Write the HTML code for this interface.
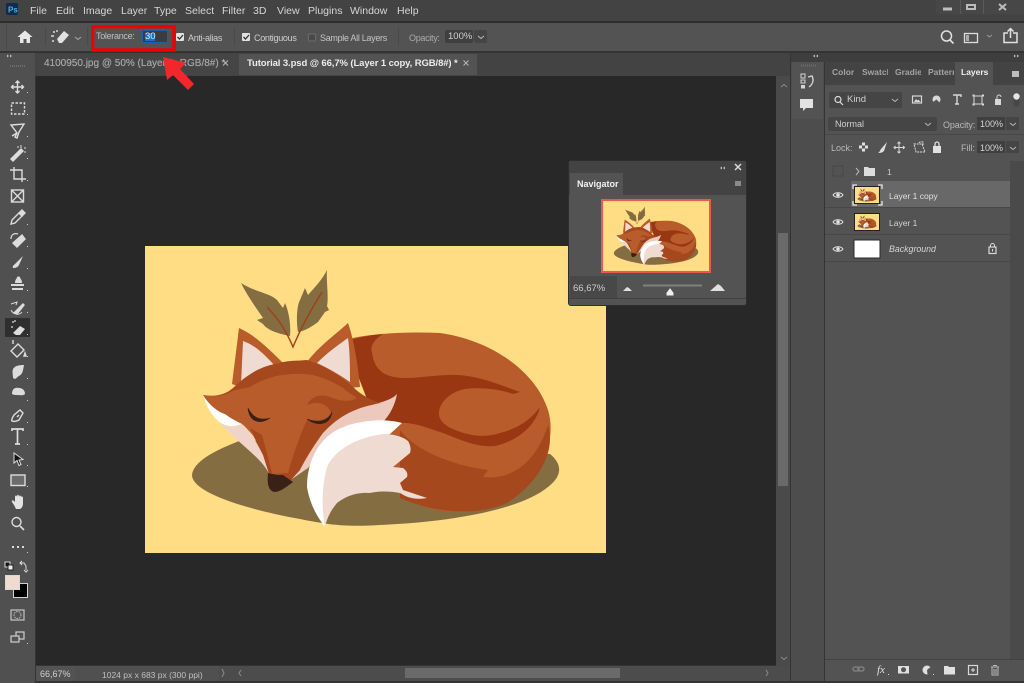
<!DOCTYPE html>
<html><head><meta charset="utf-8"><style>
html,body{margin:0;padding:0;width:1024px;height:683px;overflow:hidden;background:#2e2e2e}
body{position:relative;font-family:"Liberation Sans",sans-serif;color:#c8c8c8;font-size:10px}
.b{position:absolute}
.t{position:absolute;white-space:nowrap;line-height:12px}
.o{font-size:9px;letter-spacing:-.3px}
svg{position:absolute;left:0;top:0}
</style></head><body>
<div class="b" style="left:0;top:0;width:1024px;height:21px;background:#434343"></div>
<div class="b" style="left:936px;top:0;width:88px;height:14px;background:#474747;border-radius:0 0 0 3px"></div>
<div class="b" style="left:0;top:23px;width:1024px;height:28px;background:#535353"></div>
<div class="b" style="left:0;top:51px;width:1024px;height:632px;background:#343434"></div>
<div class="b" style="left:0;top:53px;width:35px;height:630px;background:#505050"></div>
<div class="b" style="left:35px;top:53px;width:755px;height:23px;background:#434343"></div>
<div class="b" style="left:36px;top:54px;width:203px;height:21px;background:#454545"></div>
<div class="b" style="left:239px;top:54px;width:238px;height:21px;background:#535353"></div>
<div class="b" style="left:36px;top:76px;width:740px;height:589px;background:#282828"></div>
<div class="b" style="left:776px;top:76px;width:14px;height:590px;background:#4a4a4a"></div>
<div class="b" style="left:778px;top:233px;width:10px;height:253px;background:#6a6a6a"></div>
<div class="b" style="left:36px;top:666px;width:754px;height:15px;background:#4c4c4c"></div>
<div class="b" style="left:36px;top:666px;width:39px;height:15px;background:#535353"></div>
<div class="b" style="left:75px;top:666px;width:144px;height:15px;background:#505050"></div>
<div class="b" style="left:405px;top:668px;width:215px;height:10px;background:#6a6a6a"></div>
<div class="b" style="left:791px;top:53px;width:33px;height:628px;background:#4d4d4d"></div>
<div class="b" style="left:792px;top:62px;width:31px;height:57px;background:#535353"></div>
<div class="b" style="left:825px;top:62px;width:199px;height:619px;background:#535353"></div>
<div class="b" style="left:825px;top:62px;width:199px;height:23px;background:#434343"></div>
<div class="b" style="left:955px;top:62px;width:38px;height:23px;background:#535353"></div>
<div class="b" style="left:791px;top:53px;width:233px;height:9px;background:#3e3e3e"></div>
<div class="b" style="left:1010px;top:161px;width:14px;height:498px;background:#4a4a4a"></div>
<div class="b" style="left:851px;top:181px;width:159px;height:26px;background:#686868"></div>
<div class="b" style="left:825px;top:181px;width:26px;height:26px;background:#535353"></div>
<div class="b" style="left:825px;top:207px;width:185px;height:1px;background:#474747"></div>
<div class="b" style="left:825px;top:234px;width:185px;height:1px;background:#474747"></div>
<div class="b" style="left:825px;top:261px;width:185px;height:1px;background:#474747"></div>
<div class="b" style="left:825px;top:134px;width:199px;height:1px;background:#484848"></div>
<div class="b" style="left:825px;top:659px;width:199px;height:1px;background:#434343"></div>
<div class="b" style="left:829px;top:92px;width:73px;height:16px;background:#454545;border-radius:2px"></div>
<div class="b" style="left:828px;top:117px;width:109px;height:14px;background:#454545;border-radius:2px"></div>
<div class="b" style="left:977px;top:117px;width:28px;height:13px;background:#3f3f3f"></div>
<div class="b" style="left:1006px;top:117px;width:13px;height:13px;background:#454545"></div>
<div class="b" style="left:977px;top:141px;width:28px;height:12px;background:#3f3f3f"></div>
<div class="b" style="left:1006px;top:141px;width:13px;height:12px;background:#454545"></div>
<div class="b" style="left:445px;top:30px;width:28px;height:13px;background:#3f3f3f;border-radius:2px"></div>
<div class="b" style="left:474px;top:30px;width:13px;height:13px;background:#454545;border-radius:2px"></div>
<div class="b" style="left:142px;top:30px;width:26px;height:13px;background:#3c3c3c;box-shadow:inset 0 0 0 1px #1d62a8"></div>
<div class="b" style="left:145px;top:33px;width:10px;height:8px;background:#1a6fc4"></div>
<div class="b" style="left:145px;top:246px;width:461px;height:307px;background:#ffdd85"></div>

<div class="t" style="left:44px;top:58px;font-size:10px;color:#a6a6a6;text-shadow:0 0 .4px #a6a6a6">4100950.jpg @ 50% (Layer 1, RGB/8#) *</div>

<svg width="1024" height="683" viewBox="0 0 1024 683">
<defs>
<symbol id="fox" viewBox="145 246 461 307" preserveAspectRatio="none">
<rect x="145" y="246" width="461" height="307" fill="#ffdd85"/>
<path d="M242 440C215 450 192 462 192 476C194 492 240 508 300 519C330 525 345 527 380 525C450 522 520 510 548 487C565 474 560 462 550 454Z" fill="#846d41"/>
<path d="M241 283C255 292 270 293 277 300L283 308 285 303C289 312 291 325 290 336C280 334 268 331 263 324L257 320 263 318C254 305 247 295 241 283Z" fill="#846d41"/>
<path d="M327 270C326 280 329 298 327 306L329 310 325 312 318 322C310 328 304 331 298 332C296 320 297 305 300 300L305 288 308 295C315 287 322 280 327 270Z" fill="#846d41"/>
<path d="M267 307C280 320 288 335 293 347C300 330 312 308 322 292" fill="none" stroke="#a0401a" stroke-width="1.400"/>
<path d="M345 340C360 335 400 331 440 333C490 340 535 370 548 410C560 450 530 495 480 510C445 517 420 505 400 498L380 420Z" fill="#b85c2c"/>
<path d="M345 342C355 338 370 335 383 334C373 340 370 347 372 353C374 366 380 373 390 376C405 381 430 375 450 375C475 374 500 385 520 392L513 394C500 389 480 387 465 389C450 392 440 402 439 412C438 420 445 426 455 430C470 436 485 438 500 433C520 428 532 418 540 407C536 425 518 441 495 446C475 448 455 437 440 432C425 427 415 423 403 423L375 420Z" fill="#983712"/>
<path d="M400 430C415 450 450 465 488 470L483 477C510 480 535 465 548 425C556 450 540 482 507 503C480 515 440 515 400 498Z" fill="#a6481d"/>
<path d="M232 384L239 328C255 335 270 350 282 362L296 364 307 362C320 345 335 335 348 323C354 340 358 365 360 387L260 395Z" fill="#b85c2c"/>
<path d="M241 385L243 341C255 345 265 355 274 365C262 372 250 378 241 385Z" fill="#f0dbd2"/>
<path d="M317 363C327 353 338 345 348 338C350 352 350 368 350 382C340 375 328 368 317 363Z" fill="#f0dbd2"/>
<path d="M397 394C388 404 362 405 340 415L304 452 292 479 308 468 340 432 382 423C390 415 395 405 397 394Z" fill="#ecc9bc"/>
<path d="M233 388C250 372 262 366 280 363C290 360 298 361 307 360C325 366 340 375 353 387C362 396 372 400 380 403C355 408 340 415 323 433C312 448 304 462 300 470L290 481 268 473L263 453 250 430 240 423 203 395C215 397 225 395 233 388Z" fill="#a6481d"/>
<path d="M203 395C215 397 225 396 232 391L250 387C270 374 295 372 313 375C325 378 335 383 343 388C350 394 355 396 357 398C348 403 340 401 327 396C318 394 310 398 307 405C318 400 328 404 331 413C328 420 315 422 307 420C300 435 293 455 288 473L270 474 263 453C258 440 250 430 240 424C222 420 210 410 203 395Z" fill="#b85c2c"/>
<path d="M250 428C257 440 262 458 268 473L272 473C268 458 265 445 262 435Z" fill="#a6481d"/>
<path d="M203 395C209 405 218 412 225 414C230 418 236 421 242 424C232 428 224 426 218 421C210 413 206 405 203 395Z" fill="#fff"/>
<path d="M220 423C228 428 236 427 242 424C250 430 258 445 263 455L269 474C262 458 240 445 220 423Z" fill="#f0d4c8"/>
<path d="M248 408C249 420 258 426 270 418C260 421 253 418 248 408Z" fill="#3a2118" stroke="#3a2118" stroke-width=".6"/>
<path d="M307 419C318 427 330 425 332 412C328 422 318 423 307 419Z" fill="#3a2118" stroke="#3a2118" stroke-width=".6"/>
<path d="M268 473L277 475 283 475 293 482C285 488 280 492 274 492C268 490 267 483 268 473Z" fill="#3a2118"/>
<path d="M402 423C385 418 355 420 337 430C318 440 307 462 307 487C310 505 318 518 325 527C322 510 325 480 340 460C355 445 375 438 390 434Z" fill="#fff"/>
<path d="M383 434C392 434 402 436 408 441C411 446 411 450 410 453L393 467 403 468C407 471 408 474 407 477L400 483 403 490 427 498C415 500 408 498 400 493C390 491 380 491 370 493C355 492 345 497 337 503C331 510 327 518 325 527C322 510 321 490 327 467C335 450 355 438 383 434Z" fill="#f0dbd2"/>
</symbol>
</defs>
<use href="#fox" x="145" y="246" width="461" height="307"/>

<!-- PS logo -->
<rect x="6" y="3" width="12" height="12" rx="2" fill="#0f2c4a"/>
<text x="8" y="12.500" font-size="8" font-family="Liberation Sans" font-weight="bold" fill="#4fb2f3">Ps</text>

<!-- window buttons -->
<g stroke="#bdbdbd" fill="none">
<path d="M943 9h9" stroke-width="3"/>
<rect x="967" y="5" width="8" height="4" stroke-width="2"/>
<path d="M999 4l7 6M1006 4l-7 6" stroke-width="2"/>
<path d="M960.500 0v14M983.500 0v14" stroke="#5a5a5a"/>
</g>
<!-- options bar icons -->
<path d="M25 30.500l-7.500 6.500h2.500v6h3.500v-4h3v4h3.500v-6h2.500z" fill="#e8e8e8"/>
<g stroke="#4a4a4a"><path d="M6.500 24v26M45.500 27v19M87.500 27v19M234.500 27v19M398.500 27v19"/></g>
<path d="M57 39l7-8 5 4-7 8h-3z" fill="#e0e0e0"/><path d="M51 36h3M53 32h2M52 41h2M57 30v2" stroke="#ddd" stroke-width="1.400"/>
<path d="M75 37l3 2.500 3-2.500" fill="none" stroke="#aaa"/>
<!-- checks -->
<g><rect x="176" y="33" width="8" height="8" rx="1" fill="#e2e2e2"/><path d="M177.500 37l2 2 3.500-4" fill="none" stroke="#333" stroke-width="1.300"/>
<rect x="242" y="33" width="8" height="8" rx="1" fill="#e2e2e2"/><path d="M243.500 37l2 2 3.500-4" fill="none" stroke="#333" stroke-width="1.300"/>
<rect x="308.500" y="34" width="7" height="7" rx="1" fill="#484848" stroke="#6c6c6c"/></g>
<path d="M478 36l3 2.500 3-2.500" fill="none" stroke="#bbb"/>
<!-- top right -->
<circle cx="946.500" cy="36" r="5" fill="none" stroke="#e0e0e0" stroke-width="1.500"/><path d="M950 40l3.500 3.500" stroke="#e0e0e0" stroke-width="1.600"/>
<rect x="964.500" y="33.500" width="13" height="9" fill="none" stroke="#ddd" stroke-width="1.300"/><rect x="966" y="35" width="3" height="6" fill="#aaa"/>
<path d="M987 35l2.500 2 2.500-2" fill="none" stroke="#999"/>
<path d="M1008 33h-4v9.500h13v-9.500h-4M1010.500 38v-9M1007.500 31.500l3-3 3 3" fill="none" stroke="#e2e2e2" stroke-width="1.500"/>
<!-- red box and arrow -->
<rect x="92.700" y="26.700" width="81.300" height="23.300" fill="none" stroke="#f00000" stroke-width="3.400"/>
<path d="M163 57L186 63 180 69 194 84 188 90 173 75 167 80Z" fill="#f3262c"/>
<!-- collapse chevrons -->
<path d="M7 54.500l2 1.500-2 1.500zM10 54.500l2 1.500-2 1.500zM815 54.500l-2 1.500 2 1.500zM818 54.500l-2 1.500 2 1.500zM1014 54.500l2 1.500-2 1.500zM1017 54.500l2 1.500-2 1.500z" fill="#c0c0c0"/>
<path d="M10 66h15" stroke="#6e6e6e" stroke-dasharray="1 1" stroke-width="2"/>
<path d="M801 65.500h15" stroke="#6e6e6e" stroke-dasharray="1 1" stroke-width="2"/>
<!-- tab close x -->
<path d="M223 60.500l5 5M228 60.500l-5 5M463.500 60.500l5 5M468.500 60.500l-5 5" stroke="#b8b8b8"/>
<path d="M1012 71h7v6h-7z" fill="#bcbcbc"/>

<!-- tool icons -->
<g fill="none" stroke="#dcdcdc" stroke-width="1.400">
<rect x="5" y="318" width="25" height="19" fill="#2f2f2f" stroke="none"/>
<path d="M17.500 81v12M11.500 87h12M15.500 83l2-2 2 2M15.500 91l2 2 2-2M13.500 85l-2 2 2 2M21.500 85l2 2-2 2"/>
<rect x="11.500" y="103" width="13" height="11" stroke-dasharray="2.500 1.500"/>
<path d="M11 125l13-1-5 8-2 6-2-1 2-4-6-8zM17 133l-5 3"/>
<path d="M11 159l10-10 2 2-10 10z" fill="#dcdcdc"/><path d="M21 145v3M24 148h2M17 147h2M24 152h2" stroke-width="1"/>
<path d="M14 167v12h12M10 170h12v12"/>
<rect x="11.500" y="190" width="12" height="12"/><path d="M11.500 190l12 12M23.500 190l-12 12"/>
<path d="M11 224l1-4 7-7 3 3-7 7z"/><path d="M19 213l3-3 3 3-3 3z" fill="#dcdcdc"/>
<path d="M13 243l9-8 3 4-8 8z" fill="#dcdcdc"/><path d="M11 239c0-5 4-6 7-5" stroke-width="1.200"/>
<path d="M13 268c-1-2 1-3 2-4l8-8-4 9c-1 2-3 3-6 3z" fill="#dcdcdc" stroke="none"/>
<path d="M15 283c0-4 2-4 2-6a2.500 2.500 0 0 1 3 0c0 2 2 2 2 6z" fill="#dcdcdc" stroke="none"/><path d="M11 285h13M12 289h11" stroke-width="2"/>
<path d="M14 313l9-9 1 1-7 9z" fill="#dcdcdc"/><path d="M11 304l6-2-1 3M11 310c2 4 8 6 11 2" stroke-width="1"/>
<path d="M13 333l7-7 5 3-5 6h-4z" fill="#dcdcdc" stroke="none"/><path d="M12 322h2M15 320v2M11 327h2" stroke-width="1.200"/>
<path d="M11 351l7-7 6 6-7 7zM13 344v-4" /><path d="M25 353l1 3-2 0z" fill="#dcdcdc"/>
<path d="M13 378c0-3-1-6 0-9 2-3 5-4 11-4-1 5-1 9-5 11-2 1-2 2-4 3z" fill="#dcdcdc" stroke="none"/>
<path d="M12 394c0-5 3-7 7-6 4 0 6 3 6 6-2 2-5 1-8 1-2 0-3 0-5-1z" fill="#dcdcdc" stroke="none"/>
<path d="M12 421c-1-2 1-4 2-6l6-5 3 3-4 7c-2 1-5 2-7 1zM17 417l2-2"/>
<path d="M12 431v-2h11v2M17.500 429v15M15 444h5" stroke-width="1.700"/>
</g>
<path d="M14 453v10l3-2.500 2 5 2-1-2-4.500 4-.5z" fill="#111" stroke="#ddd" stroke-width="1"/>
<rect x="11" y="475" width="14" height="10.500" fill="#6c6c6c" stroke="#dcdcdc" stroke-width="1.400"/>
<path d="M14 505l-2-3c-1-2 1-2 2-1l1 1v-5c0-2 2-2 2 0 0-3 2-3 2 0 0-2 2-2 2 0 0-1 2-1 2 1v5c0 3-1 5-3 6h-4z" fill="#e4e4e4"/>
<circle cx="16.500" cy="522" r="4.500" fill="none" stroke="#dcdcdc" stroke-width="1.400"/><path d="M20 526l4 4" stroke="#dcdcdc" stroke-width="1.600"/>
<path d="M12 547h2M17 547h2M22 547h2" stroke="#dcdcdc" stroke-width="2"/>
<g fill="#cfcfcf"><path d="M27 92h1v1h-1zM27 114h1v1h-1zM27 136h1v1h-1zM27 158h1v1h-1zM27 180h1v1h-1zM27 224h1v1h-1zM27 246h1v1h-1zM27 268h1v1h-1zM27 290h1v1h-1zM27 312h1v1h-1zM27 334h1v1h-1zM27 356h1v1h-1zM27 378h1v1h-1zM27 400h1v1h-1zM27 422h1v1h-1zM27 444h1v1h-1zM27 465h1v1h-1zM27 486h1v1h-1zM27 552h1v1h-1zM27 643h1v1h-1z"/></g>
<rect x="5" y="562" width="5" height="5" fill="#111" stroke="#ddd"/><rect x="8" y="565" width="5" height="5" fill="#eee" stroke="#222"/>
<path d="M20 563h4l2 3v4M24 570l2 2 2-2M22 561l-2 2 2 2" fill="none" stroke="#ddd"/>
<rect x="13.500" y="583.500" width="14" height="14" fill="#000" stroke="#d0d0d0"/>
<rect x="5.500" y="575.500" width="14" height="14" fill="#f0dbd2" stroke="#d8d8d8"/>
<rect x="11" y="610" width="13" height="10" fill="#555" stroke="#bdbdbd" stroke-width="1.300"/><circle cx="17.500" cy="615" r="3.500" fill="none" stroke="#bdbdbd" stroke-dasharray="1.500 1"/>
<rect x="16" y="632" width="8" height="7" fill="#535353" stroke="#cfcfcf" stroke-width="1.200"/><rect x="11" y="636" width="8" height="6" fill="#535353" stroke="#cfcfcf" stroke-width="1.200"/>

<!-- mid dock -->
<g fill="#d4d4d4"><rect x="801" y="74" width="4" height="4" fill="none" stroke="#d4d4d4"/><rect x="801" y="80" width="4" height="3" fill="none" stroke="#d4d4d4"/><rect x="801" y="85" width="4" height="3.500"/></g>
<path d="M808 77l4-1c2 4 1 8-3 11" fill="none" stroke="#d4d4d4" stroke-width="1.400"/>
<path d="M800 99h13v9h-7l-3 3v-3h-3z" fill="#e2e2e2"/>
<!-- filter row -->
<circle cx="838" cy="99.500" r="3" fill="none" stroke="#ddd" stroke-width="1.200"/><path d="M840 102l3 3" stroke="#ddd" stroke-width="1.200"/>
<path d="M892 99l3 2.500 3-2.500M925 123l3 2.500 3-2.500M1010 123l3 2.500 3-2.500M1010 147l3 2.500 3-2.500" fill="none" stroke="#b5b5b5"/>
<rect x="912.500" y="96" width="9" height="7" fill="#535353" stroke="#d8d8d8" stroke-width="1.200"/><path d="M914 102l2-3 1.500 1.500 1-1 2 2.500z" fill="#d8d8d8"/>
<circle cx="936.500" cy="99.500" r="4" fill="#d8d8d8"/><path d="M936.500 99.500l3 3a4 4 0 0 1-6.500-.5z" fill="#555"/>
<path d="M953 95h8v2M957 95v9M955 104h4" fill="none" stroke="#d8d8d8" stroke-width="1.400"/>
<rect x="974" y="96" width="8" height="8" fill="none" stroke="#d8d8d8"/><path d="M972.500 94.500h2v2h-2zM982 94.500h2v2h-2zM972.500 103.500h2v2h-2zM982 103.500h2v2h-2z" fill="#d8d8d8"/>
<rect x="995" y="99" width="6" height="6" fill="#d8d8d8"/><path d="M997 99v-2a2 2 0 0 1 4 0" fill="none" stroke="#d8d8d8"/>
<rect x="1013.500" y="94" width="6" height="13" rx="3" fill="#474747"/><circle cx="1016.500" cy="96.500" r="3.200" fill="#e6e6e6"/>
<!-- lock row -->
<rect x="859" y="142.500" width="9" height="9" fill="#e0e0e0"/><path d="M859 142.500h3v3h-3zM865 142.500h3v3h-3zM862 145.500h3v3h-3zM859 148.500h3v3h-3zM865 148.500h3v3h-3z" fill="#555"/>
<path d="M878 153c2-1 2-3 3-4l6-7-3 9c-2 2-4 2-6 2z" fill="#dcdcdc"/>
<path d="M899 142v11M894 147.500h11M897.500 143.500l1.500-1.500 1.500 1.500M897.500 151.500l1.500 1.500 1.500-1.500M895.500 146l-1.500 1.500 1.500 1.500M903 146l1.500 1.500-1.500 1.500" fill="none" stroke="#d8d8d8"/>
<path d="M914 144h8l3 8h-9zM919 143l1-1 3 0v3" fill="none" stroke="#d8d8d8" stroke-dasharray="2 .8"/>
<rect x="933" y="146" width="8" height="7" fill="#e2e2e2"/><path d="M935 146v-2a2 2 0 0 1 4 0v2" fill="none" stroke="#e2e2e2" stroke-width="1.300"/>
<!-- layers -->
<rect x="833" y="166" width="10" height="10" fill="none" stroke="#474747"/>
<path d="M856 168l3 3.500-3 3.500" fill="none" stroke="#bbb"/>
<path d="M864 167h4l1 1h6v8h-11z" fill="#dcdcdc"/>
<g fill="none" stroke="#e2e2e2"><path d="M833 195c2-3 8-3 10 0-2 3-8 3-10 0z"/><path d="M833 222c2-3 8-3 10 0-2 3-8 3-10 0z"/><path d="M833 249c2-3 8-3 10 0-2 3-8 3-10 0z"/></g>
<circle cx="838" cy="195" r="1.800" fill="#e2e2e2"/><circle cx="838" cy="222" r="1.800" fill="#e2e2e2"/><circle cx="838" cy="249" r="1.800" fill="#e2e2e2"/>
<rect x="854" y="186" width="26" height="18" fill="#222"/>
<use href="#fox" x="855" y="187" width="24" height="16"/>
<path d="M853 189v-4h4M878 185h4v4M882 201v4h-4M857 205h-4v-4" fill="none" stroke="#e6e6e6" stroke-width="1.300"/>
<rect x="854" y="213" width="26" height="18" fill="#222"/>
<use href="#fox" x="855" y="214" width="24" height="16"/>
<rect x="854" y="240" width="26" height="18" fill="#fff" stroke="#2a2a2a"/>
<rect x="989" y="247" width="7" height="6.500" fill="none" stroke="#d8d8d8" stroke-width="1.200"/><path d="M990.500 247v-1.500a2 2 0 0 1 4 0v1.500" fill="none" stroke="#d8d8d8"/><path d="M992 249h1v2.500h-1z" fill="#d8d8d8"/>
<!-- footer icons -->
<g fill="none" stroke="#858585" stroke-width="1.300"><rect x="853" y="667" width="6" height="4" rx="2"/><rect x="858" y="667" width="6" height="4" rx="2"/></g>
<rect x="898" y="666" width="11" height="7.500" fill="#e0e0e0"/><circle cx="903.500" cy="669.700" r="2.500" fill="#555"/>
<circle cx="927" cy="670" r="4.500" fill="#e0e0e0"/><path d="M927 670l3.500-3a4.500 4.500 0 0 1-3 7.500z" fill="#555"/>
<path d="M944 666h4l1 1h6v7.500h-11z" fill="#e0e0e0"/>
<rect x="968.500" y="665.500" width="9" height="9" fill="none" stroke="#d8d8d8" stroke-width="1.200"/><path d="M971 670h4M973 668v4" stroke="#e0e0e0"/>
<path d="M991 667h8M993 665.500h4M992 667.500v7.500h6v-7.500M994 669v5M996 669v5" fill="none" stroke="#b8b8b8"/>
<path d="M888 674h1v1h-1zM933 674h1v1h-1z" fill="#ddd"/>
<!-- status arrows -->
<path d="M222 669l2 4-2 4M241 670l-2 3 2 3M766 670l2 3-2 3M781 657l3 2.500 3-2.500M781 87l3-2.500 3 2.500" fill="none" stroke="#8c8c8c"/>
</svg>

<!-- navigator -->
<div class="b" style="left:569px;top:161px;width:177px;height:144px;background:#535353;border-radius:2px;overflow:hidden;box-shadow:0 0 0 1px #2e2e2e">
<div class="b" style="left:0;top:0;width:177px;height:34px;background:#434343"></div>
<div class="b" style="left:1px;top:12px;width:53px;height:23px;background:#535353"></div>
<div class="t" style="left:8px;top:17px;font-size:9px;font-weight:bold;color:#f2f2f2">Navigator</div>
<div class="b" style="left:1px;top:115px;width:47px;height:22px;background:#484848"></div>
<div class="b" style="left:0;top:137px;width:177px;height:1px;background:#414141"></div>
<div class="t" style="left:4px;top:122px;color:#cfcfcf;font-size:9.500px">66,67%</div>
<svg width="177" height="144" viewBox="0 0 177 144">
<rect x="33" y="39" width="108" height="72" fill="none" stroke="#e85a50" stroke-width="2"/>
<use href="#fox" x="34" y="40" width="106" height="70"/>
<path d="M54 130l4-4 2 1 3 3z" fill="#e0e0e0"/><path d="M141 130l8-7 3 2 4 5z" fill="#e0e0e0"/>
<path d="M74 124.500h59" stroke="#808080" stroke-width="2"/>
<path d="M101 128l-3 4v2h6v-2z" fill="#eee" stroke="#eee"/>
<path d="M153 5.500l-2 1.500 2 1.500zM156 5.500l-2 1.500 2 1.500z" fill="#c0c0c0"/>
<path d="M166 3l6 6M172 3l-6 6" stroke="#d8d8d8" stroke-width="1.500"/>
<rect x="166" y="20" width="6" height="5" fill="#8a8a8a"/>
</svg>
</div>

<!-- text -->
<div class="t" style="left:30px;top:5px;font-size:10.500px;color:#d6d6d6">File</div>
<div class="t" style="left:56px;top:5px;font-size:10.500px;color:#d6d6d6">Edit</div>
<div class="t" style="left:83px;top:5px;font-size:10.500px;color:#d6d6d6">Image</div>
<div class="t" style="left:121px;top:5px;font-size:10.500px;color:#d6d6d6">Layer</div>
<div class="t" style="left:154px;top:5px;font-size:10.500px;color:#d6d6d6">Type</div>
<div class="t" style="left:185px;top:5px;font-size:10.500px;color:#d6d6d6">Select</div>
<div class="t" style="left:222px;top:5px;font-size:10.500px;color:#d6d6d6">Filter</div>
<div class="t" style="left:253px;top:5px;font-size:10.500px;color:#d6d6d6">3D</div>
<div class="t" style="left:277px;top:5px;font-size:10.500px;color:#d6d6d6">View</div>
<div class="t" style="left:308px;top:5px;font-size:10.500px;color:#d6d6d6">Plugins</div>
<div class="t" style="left:350px;top:5px;font-size:10.500px;color:#d6d6d6">Window</div>
<div class="t" style="left:397px;top:5px;font-size:10.500px;color:#d6d6d6">Help</div>

<div class="t o" style="left:96px;top:30px;color:#c0c0c0">Tolerance:</div>
<div class="t" style="left:145px;top:31px;font-size:9.500px;color:#e8e8e8">30</div>
<div class="t o" style="left:188px;top:32px;color:#cfcfcf">Anti-alias</div>
<div class="t o" style="left:254px;top:32px;color:#cfcfcf">Contiguous</div>
<div class="t o" style="left:320px;top:32px;color:#c4c4c4">Sample All Layers</div>
<div class="t o" style="left:409px;top:32px;color:#aaaaaa">Opacity:</div>
<div class="t" style="left:448px;top:31px;font-size:9.500px;color:#d0d0d0">100%</div>

<div class="t" style="left:247px;top:58px;font-size:9.500px;color:#ececec;font-weight:bold;letter-spacing:-.1px">Tutorial 3.psd @ 66,7% (Layer 1 copy, RGB/8#) *</div>

<div class="t" style="left:832px;top:66px;font-size:8.500px;font-weight:bold;color:#a4a4a4">Color</div>
<div class="t" style="left:862px;top:66px;font-size:8.500px;font-weight:bold;color:#a4a4a4;width:26px;overflow:hidden">Swatches</div>
<div class="t" style="left:895px;top:66px;font-size:8.500px;font-weight:bold;color:#a4a4a4;width:26px;overflow:hidden">Gradients</div>
<div class="t" style="left:928px;top:66px;font-size:8.500px;font-weight:bold;color:#a4a4a4;width:26px;overflow:hidden">Patterns</div>
<div class="t" style="left:961px;top:66px;font-size:8.500px;font-weight:bold;color:#f0f0f0">Layers</div>
<div class="t" style="left:847px;top:94px;font-size:9.500px;color:#d0d0d0">Kind</div>
<div class="t" style="left:835px;top:118px;font-size:9px;color:#d0d0d0">Normal</div>
<div class="t" style="left:943px;top:119px;font-size:9px;letter-spacing:-.1px;color:#b8b8b8">Opacity:</div>
<div class="t" style="left:980px;top:118px;font-size:9px;color:#d4d4d4">100%</div>
<div class="t" style="left:831px;top:142px;font-size:9px;color:#b8b8b8">Lock:</div>
<div class="t" style="left:961px;top:142px;font-size:9px;color:#b8b8b8">Fill:</div>
<div class="t" style="left:980px;top:142px;font-size:9px;color:#d4d4d4">100%</div>
<div class="t" style="left:887px;top:166px;font-size:8.500px;color:#cccccc">1</div>
<div class="t" style="left:889px;top:190px;font-size:8.500px;color:#e0e0e0">Layer 1 copy</div>
<div class="t" style="left:889px;top:217px;font-size:8.500px;color:#d4d4d4">Layer 1</div>
<div class="t" style="left:889px;top:243px;font-size:8.800px;font-style:italic;color:#d4d4d4">Background</div>

<div class="t" style="left:40px;top:668px;font-size:9px;color:#d0d0d0">66,67%</div>
<div class="t" style="left:102px;top:669px;font-size:8.500px;color:#c0c0c0">1024 px x 683 px (300 ppi)</div>
<div class="t" style="left:877px;top:664px;font-size:11px;font-style:italic;font-family:'Liberation Serif',serif;color:#e0e0e0">fx</div>
</body></html>
